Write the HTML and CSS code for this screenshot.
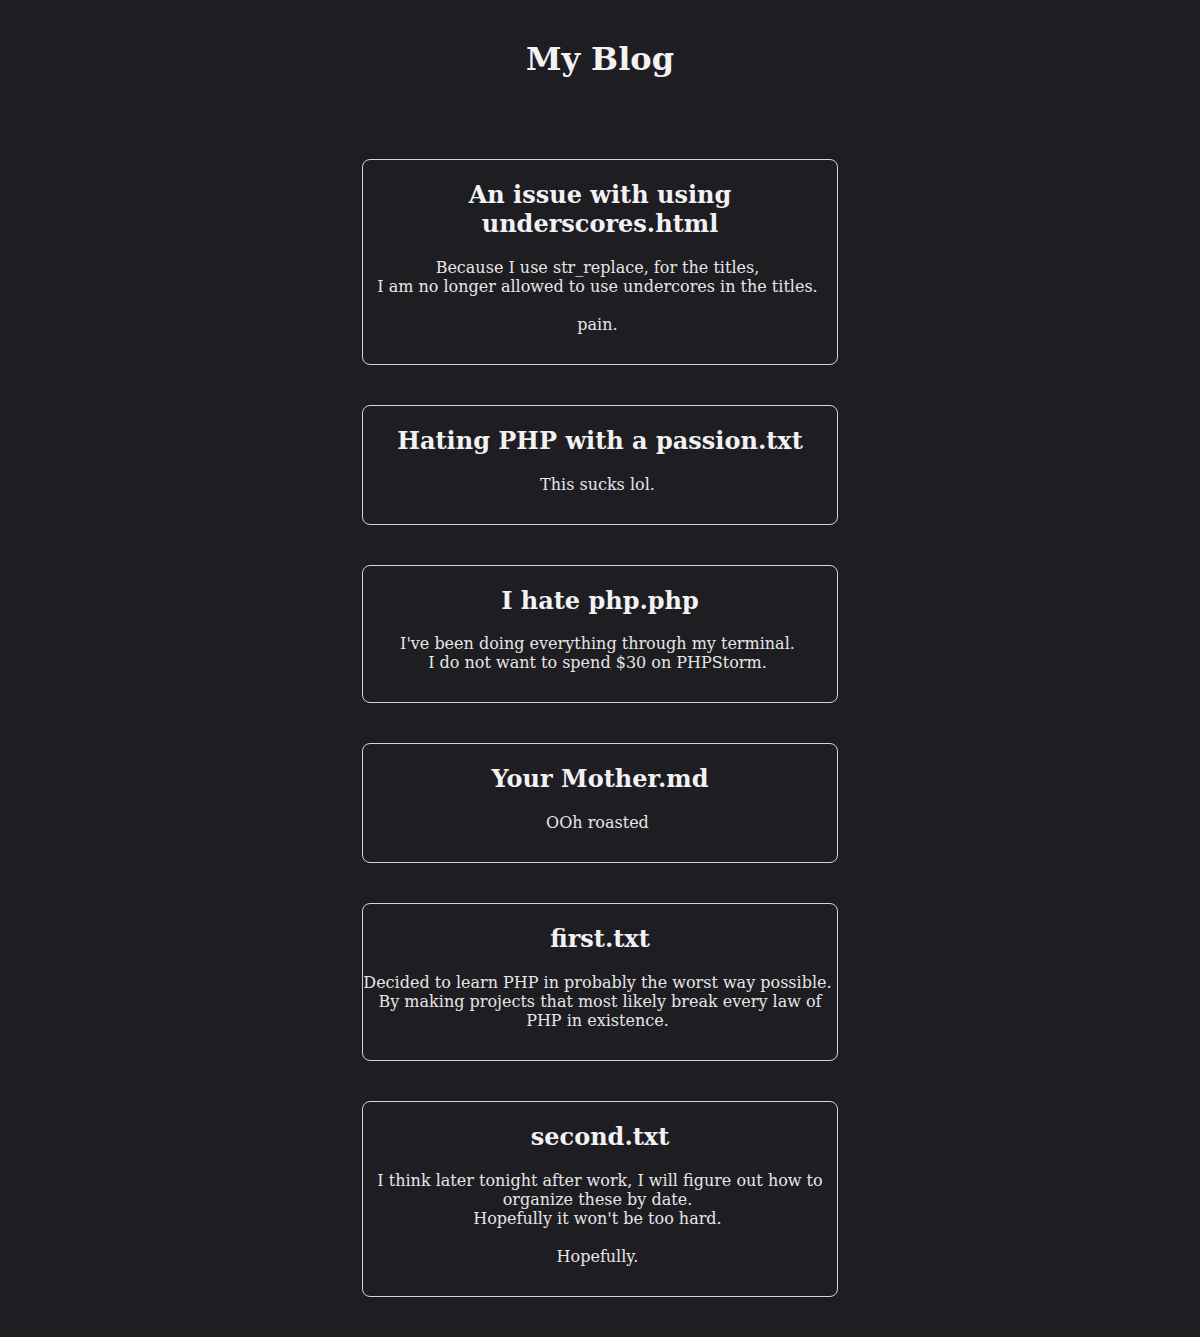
FILE: index.html
```html
<!DOCTYPE html>
<html lang="en">
<head>
<meta charset="utf-8">
<title>My Blog</title>
<link rel="stylesheet" href="styles.css">
</head>
<body>
<header class="site-header">
<h1 class="site-title">My Blog</h1>
</header>
<main class="posts">
<article class="post">
<h2 class="post-title">An issue with using underscores.html</h2>
<p class="post-body">Because I use str_replace, for the titles, 
I am no longer allowed to use undercores in the titles. 

pain. </p>
</article>
<article class="post">
<h2 class="post-title">Hating PHP with a passion.txt</h2>
<p class="post-body">This sucks lol. </p>
</article>
<article class="post post--tight">
<h2 class="post-title">I hate php.php</h2>
<p class="post-body">I've been doing everything through my terminal. 
I do not want to spend $30 on PHPStorm. </p>
</article>
<article class="post">
<h2 class="post-title">Your Mother.md</h2>
<p class="post-body">OOh roasted </p>
</article>
<article class="post">
<h2 class="post-title">first.txt</h2>
<p class="post-body">Decided to learn PHP in probably the worst way possible. 
By making projects that most likely break every law of PHP in existence. </p>
</article>
<article class="post">
<h2 class="post-title">second.txt</h2>
<p class="post-body">I think later tonight after work, I will figure out how to organize these by date. 
Hopefully it won't be too hard. 

Hopefully. </p>
</article>
</main>
</body>
</html>
```
FILE: styles.css
```css
html, body {
  margin: 0;
  padding: 0;
  background: #1e1d22;
}

body {
  font-family: "DejaVu Serif", serif;
  color: #ececec;
  text-align: center;
}

.site-header {
  padding-top: 40px;
}

.site-title {
  margin: 0;
  font-size: 32px;
  font-weight: bold;
  color: #f2f2f2;
}

.posts {
  display: flex;
  flex-direction: column;
  align-items: center;
  gap: 40px;
  margin-top: 81px;
  padding-bottom: 41px;
}

.post {
  width: 474px;
  border: 1px solid #d4d4d4;
  border-radius: 8px;
  padding-bottom: 14.16px;
}

.post-title {
  margin: 0.83em 0;
  font-size: 24px;
  font-weight: bold;
  color: #f2f2f2;
}

.post--tight .post-title {
  margin-bottom: 18.92px;
}

.post-body {
  margin: 1em 0;
  font-size: 16px;
  white-space: pre-wrap;
  color: #e6e6e6;
}
```
